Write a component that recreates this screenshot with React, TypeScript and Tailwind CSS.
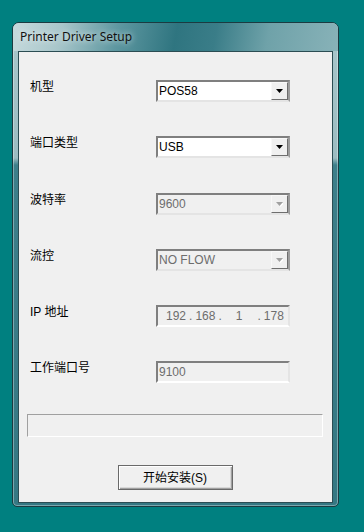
import React from 'react';

const ui = { fontFamily: '"Liberation Sans", Arial, sans-serif' };
const cjk = { fontFamily: '"Liberation Sans", "Noto Sans CJK SC", sans-serif' };

function Arrow({ disabled }: { disabled?: boolean }) {
  return (
    <div className="flex h-full w-[17px] items-center justify-center border border-t-[#f8f8f8] border-l-[#f8f8f8] border-r-[#6e6e6e] border-b-[#6e6e6e] bg-[#f0f0f0]">
      <svg width="7" height="5" viewBox="0 0 7 5">
        {disabled && <path d="M1 1h7L4.5 5z" fill="#ffffff" />}
        <path d="M0 0h7L3.5 4z" fill={disabled ? '#a0a0a0' : '#000000'} />
      </svg>
    </div>
  );
}

function Combo({ value, disabled }: { value: string; disabled?: boolean }) {
  return (
    <div className="flex h-[22px] w-[134px] border-2 border-t-[#7f7f7f] border-l-[#7f7f7f] border-r-[#9c9c9c] border-b-[#e4e4e4]">
      <div
        className={`flex flex-1 items-center pl-[1px] text-[12px] ${disabled ? 'bg-[#f0f0f0] text-[#6d6d6d]' : 'bg-white text-black'}`}
        style={ui}
      >
        {value}
      </div>
      <Arrow disabled={disabled} />
    </div>
  );
}

function Field({ children }: { children: React.ReactNode }) {
  return (
    <div
      className="flex h-[22px] w-[134px] items-center border-2 border-t-[#7f7f7f] border-l-[#7f7f7f] border-r-[#e4e4e4] border-b-[#ffffff] bg-[#f0f0f0] text-[12px] text-[#6d6d6d]"
      style={ui}
    >
      {children}
    </div>
  );
}

function Row({ label, children }: { label: string; children: React.ReactNode }) {
  return (
    <div className="flex h-[22px] items-start">
      <div className="w-[137px] pl-[11px] text-[12px] leading-[14px] text-black" style={cjk}>
        {label}
      </div>
      {children}
    </div>
  );
}

export default function App() {
  return (
    <div className="h-[532px] w-[364px] overflow-hidden bg-[#008080] pl-[12px] pt-[22px]">
      <div className="flex h-[485px] w-[327px] flex-col rounded-t-[7px] rounded-b-[5px] border border-[#1b3b41] bg-[linear-gradient(to_bottom,#a9c7cb_0px,#9cbcc1_135px,#3d7f8a_142px,#357883_100%)] shadow-[inset_0_0_0_1px_rgba(255,255,255,0.35)]">
        <div className="flex h-[28px] items-center rounded-t-[6px] bg-[linear-gradient(100deg,#c6dadd_0%,#a8c6ca_15%,#5f98a1_32%,#2f7580_50%,#3a7d88_62%,#6fa2a9_78%,#88b2b8_100%)] pl-[7px]">
          <span
            className="text-[12px] text-[#111] [text-shadow:0_0_6px_rgba(255,255,255,0.9)]"
            style={{ fontFamily: '"Noto Sans", "Liberation Sans", sans-serif' }}
          >
            Printer Driver Setup
          </span>
        </div>
        <div className="mx-[5px] flex h-[452px] flex-col border border-[#2b4d53] bg-[#f0f0f0]">
          <div className="mt-[28px] flex flex-col gap-[34px]">
            <Row label="机型">
              <Combo value="POS58" />
            </Row>
            <Row label="端口类型">
              <Combo value="USB" />
            </Row>
            <div className="mt-[1px] flex flex-col gap-[34px]">
              <Row label="波特率">
                <Combo value="9600" disabled />
              </Row>
              <Row label="流控">
                <Combo value="NO FLOW" disabled />
              </Row>
              <Row label="IP 地址">
                <Field>
                  <span className="ml-[8px]">192</span>
                  <span className="ml-[3px]">.</span>
                  <span className="ml-[3px]">168</span>
                  <span className="ml-[3px]">.</span>
                  <span className="ml-[14px]">1</span>
                  <span className="ml-[15px]">.</span>
                  <span className="ml-[3px]">178</span>
                </Field>
              </Row>
              <Row label="工作端口号">
                <Field>
                  <span className="pl-[1px]">9100</span>
                </Field>
              </Row>
            </div>
          </div>
          <div className="ml-[8px] mr-[9px] mt-[31px] h-[23px] border border-t-[#a0a0a0] border-l-[#a0a0a0] border-r-white border-b-white" />
          <div className="mt-[28px] flex justify-center pr-[1px]">
            <button
              className="flex h-[25px] w-[115px] items-center justify-center border border-[#6a6a6a] bg-[#f0f0f0] text-[12px] text-black shadow-[inset_1px_1px_0_#ffffff,inset_-1px_-1px_0_#a0a0a0,inset_-2px_-2px_0_#d8d8d8]"
              style={cjk}
            >
              开始安装(S)
            </button>
          </div>
        </div>
      </div>
    </div>
  );
}
